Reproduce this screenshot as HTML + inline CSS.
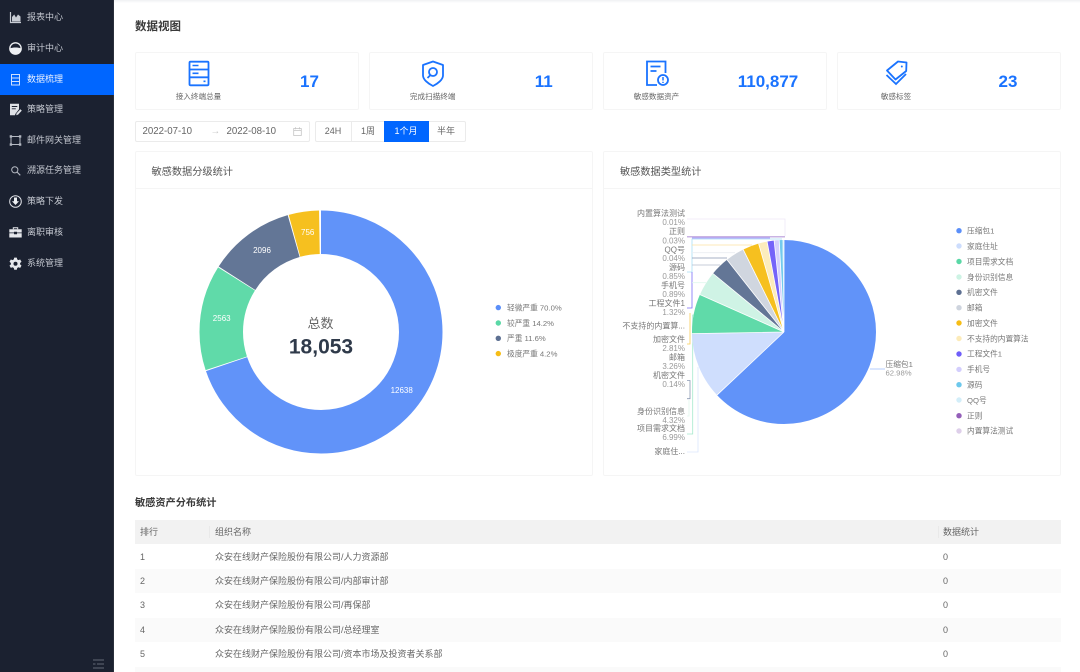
<!DOCTYPE html>
<html lang="zh-CN">
<head>
<meta charset="utf-8">
<title>数据视图</title>
<style>
html,body{margin:0;padding:0;background:#fff;width:1080px;height:672px;overflow:hidden}
body{font-family:"Liberation Sans","Noto Sans CJK SC",sans-serif;color:#666}
#root{position:relative;width:1080px;height:672px;overflow:hidden;filter:blur(.35px)}
.abs,.card,.panel,.nav,.nav a{position:absolute}
.nav{left:0;top:0;height:672px;background:#1b2130;border-right:1px solid #2a2f3b;width:113px}
.nav a{left:0;width:114px;height:31px;line-height:31px;font-size:9px;color:#c4c8d0;padding-left:27px;box-sizing:border-box;white-space:nowrap}
.nav a.on{background:#0066ff;color:#e8f0ff}
.nav svg{position:absolute;left:9px;top:9px;width:13px;height:13px}
.h1{left:135px;top:19px;font-size:11.5px;line-height:16px;font-weight:700;color:#3a3a3a}
.card{top:52px;width:224px;height:58px;border:1px solid #f5f5f5;border-radius:2px;box-sizing:border-box}
.lbl{position:absolute;top:38px;font-size:7.6px;line-height:12px;color:#666;transform:translateX(-50%);white-space:nowrap}
.val{position:absolute;top:17px;font-weight:700;font-size:17px;line-height:24px;color:#1a73ff;transform:translateX(-50%);white-space:nowrap}
.card svg{position:absolute;top:7px;width:26px;height:27px}
.picker{left:134.5px;top:120.5px;width:175px;height:21px;border:1px solid #ebebeb;border-radius:2px;box-sizing:border-box}
.picker span{position:absolute;top:0;line-height:19px;font-size:9.7px;color:#666;white-space:nowrap}
.seg{left:314.5px;top:120.5px;width:151px;height:21px;border:1px solid #ebebeb;border-radius:2px;box-sizing:border-box}
.seg span{position:absolute;top:0;height:19px;line-height:19px;font-size:9px;color:#666;text-align:center}
.seg span.on{background:#0066ff;color:#fff;box-shadow:0 0 0 1px #0066ff}
.panel{top:151px;height:324.5px;width:458px;border:1px solid #f5f5f5;border-radius:2px;box-sizing:border-box}
.panel b{position:absolute;left:16px;top:13px;font-weight:400;font-size:10.2px;line-height:16px;color:#555;white-space:nowrap}
.panel i{position:absolute;left:0;right:0;top:36px;height:1px;background:#f5f5f5}
.h2{left:135px;top:496px;font-size:10.2px;line-height:15px;font-weight:700;color:#3a3a3a}
.row{position:absolute;left:135px;width:926px;height:24.4px;font-size:9px;line-height:24.4px;color:#666}
.row span{position:absolute;top:0;white-space:nowrap}
.row.head{background:#f2f2f2}
.row.alt{background:#fafafa}
.row.head u{position:absolute;top:6px;width:1px;height:12px;background:#e9e9e9}
svg.chart{position:absolute;left:0;top:0;width:1080px;height:672px;pointer-events:none}
svg text{font-family:"Liberation Sans","Noto Sans CJK SC",sans-serif}
</style>
</head>
<body>
<div id="root">
<div class="abs" style="left:114px;top:0;width:966px;height:3px;background:linear-gradient(#f0f1f3,#fff)"></div>

<div class="nav">
  <a style="top:2px"><svg viewBox="0 0 13 13"><path d="M1.500 1v10.500H12" fill="none" stroke="#c8ccd4" stroke-width="1.200"/><path d="M3 10.500V6l2.200-2.500L7 6.500l2-3 2.500 2v5z" fill="#c8ccd4"/></svg>报表中心</a>
  <a style="top:33px"><svg viewBox="0 0 13 13"><circle cx="6.500" cy="6.500" r="5.700" fill="none" stroke="#eef0f3" stroke-width="1.300"/><path d="M.8 6.500c3.500-1.300 7.900-1.300 11.400 0a5.700 5.700 0 0 1-11.400 0z" fill="#eef0f3"/></svg>审计中心</a>
  <a class="on" style="top:64px"><svg viewBox="0 0 13 13"><path d="M2.500 1.500h8v10.500h-8zM2.500 5h8M2.500 8.500h8" fill="none" stroke="#cfe0ff" stroke-width="1"/></svg>数据梳理</a>
  <a style="top:94px"><svg viewBox="0 0 13 13"><path d="M1 .8h9v5.500L6.300 11l-.3 1.200H1z" fill="#dfe1e6"/><path d="M2.800 3.500h5.500M2.800 5.800h4" stroke="#1b2130" stroke-width=".9"/><path d="M7.200 12.300l.4-2 3.800-4 1.400 1.300-3.700 4z" fill="#dfe1e6"/></svg>策略管理</a>
  <a style="top:125px"><svg viewBox="0 0 13 13"><path d="M2 2.500h9v8H2z" fill="none" stroke="#b5b9c2" stroke-width="1"/><path d="M.7 1.200h2.400v2.400H.7zM9.900 1.200h2.400v2.400H9.900zM.7 9.400h2.400v2.400H.7zM9.900 9.400h2.400v2.400H9.900z" fill="#b5b9c2"/></svg>邮件网关管理</a>
  <a style="top:155px"><svg viewBox="0 0 13 13"><circle cx="5.800" cy="5.800" r="3.100" fill="none" stroke="#b5b9c2" stroke-width="1"/><path d="M8 8l3.300 3.300" stroke="#b5b9c2" stroke-width="1.100"/></svg>溯源任务管理</a>
  <a style="top:186px"><svg viewBox="0 0 13 13"><circle cx="6.500" cy="6.500" r="5.800" fill="none" stroke="#dfe1e6" stroke-width="1"/><path d="M5 2.500h3v3.800h2L6.500 10 3 6.300h2z" fill="#eef0f3"/></svg>策略下发</a>
  <a style="top:217px"><svg viewBox="0 0 13 13"><path d="M4.300 3.200V1.800h4.400v1.400" fill="none" stroke="#e6e8ec" stroke-width="1"/><path d="M.3 3.200h12.400v3.300H8v-.8H5v.8H.3zM.3 7.300H5v1h3v-1h4.700v4.200H.3z" fill="#e6e8ec"/></svg>离职审核</a>
  <a style="top:248px"><svg viewBox="0 0 13 13"><path d="M5.200.6h2.600l.4 1.800 1.200.7 1.800-.6 1.300 2.300-1.400 1.200v1.400l1.400 1.200-1.300 2.300-1.800-.6-1.200.7-.4 1.800H5.200l-.4-1.800-1.200-.7-1.800.6L.5 8.600l1.400-1.200V6L.5 4.800l1.300-2.300 1.800.6 1.200-.7z" fill="#e6e8ec"/><circle cx="6.500" cy="6.700" r="2" fill="#1b2130"/></svg>系统管理</a>
  <svg style="left:93px;top:659px;width:11px;height:10px" viewBox="0 0 11 10"><path d="M0 1h11M4 5h7M0 9h11M0 5h2.500" stroke="#555b68" stroke-width="1.300"/></svg>
</div>

<div class="abs h1">数据视图</div>

<div class="card" style="left:134.500px">
  <svg style="left:50px" viewBox="0 0 26 27"><rect x="3.500" y="1.700" width="19" height="23.600" rx="1" fill="none" stroke="#1a73ff" stroke-width="1.800"/><path d="M3.500 9.500h19M3.500 17.300h19" stroke="#1a73ff" stroke-width="1.800"/><path d="M6.500 5.500h6M6.500 13.300h6M17.500 21.300h2" stroke="#1a73ff" stroke-width="1.600"/></svg>
  <div class="lbl" style="left:63px">接入终端总量</div><div class="val" style="left:174px">17</div>
</div>
<div class="card" style="left:368.700px">
  <svg style="left:50px" viewBox="0 0 26 27"><path d="M13 1.500l10 3.500v10.500c0 4-5 8-10 10.500C8 23.500 3 19.500 3 15.500V5z" fill="none" stroke="#1a73ff" stroke-width="1.800" stroke-linejoin="round"/><circle cx="13" cy="12" r="4" fill="none" stroke="#1a73ff" stroke-width="1.800"/><path d="M10 15.500l-2.500 2.500" stroke="#1a73ff" stroke-width="1.800"/></svg>
  <div class="lbl" style="left:63px">完成扫描终端</div><div class="val" style="left:174px">11</div>
</div>
<div class="card" style="left:603px">
  <svg style="left:39px" viewBox="0 0 26 27"><path d="M14 25H4V1.500h18.500V13" fill="none" stroke="#1a73ff" stroke-width="1.800"/><path d="M7.500 6.500h10M7.500 11h6" stroke="#1a73ff" stroke-width="1.700"/><circle cx="20" cy="20" r="5" fill="#fff" stroke="#1a73ff" stroke-width="1.800"/><path d="M20 17v3.500M20 21.800v1.200" stroke="#1a73ff" stroke-width="1.500"/></svg>
  <div class="lbl" style="left:52.500px">敏感数据资产</div><div class="val" style="left:164px">110,877</div>
</div>
<div class="card" style="left:837px">
  <svg style="left:46px" viewBox="0 0 26 27"><path d="M3 10.500L14 1.500l8.500 1-.3 8.500L11.500 19.500z" fill="none" stroke="#1a73ff" stroke-width="1.800" stroke-linejoin="round"/><circle cx="17.800" cy="6.500" r="1" fill="#1a73ff"/><path d="M2.500 15l9.500 9 10-10" fill="none" stroke="#1a73ff" stroke-width="1.800"/></svg>
  <div class="lbl" style="left:58px">敏感标签</div><div class="val" style="left:170px">23</div>
</div>

<div class="abs picker">
  <span style="left:7px">2022-07-10</span>
  <span style="left:75px;color:#c4c4c4">→</span>
  <span style="left:91px">2022-08-10</span>
  <svg style="position:absolute;left:157px;top:5px;width:9px;height:9px" viewBox="0 0 9 9"><path d="M.7 1.500h7.600v7H.7zM.7 3.500h7.600M2.500.3v2M6.500.3v2" fill="none" stroke="#c4c4c4" stroke-width=".8"/></svg>
</div>
<div class="abs seg">
  <span style="left:0;width:35px;border-right:1px solid #ebebeb">24H</span>
  <span style="left:36px;width:33px">1周</span>
  <span class="on" style="left:69px;width:43px">1个月</span>
  <span style="left:112px;width:37px">半年</span>
</div>

<div class="panel" style="left:134.500px"><b>敏感数据分级统计</b><i></i></div>
<div class="panel" style="left:603px"><b>敏感数据类型统计</b><i></i></div>

<div class="abs h2">敏感资产分布统计</div>
<div class="row head" style="top:520px"><span style="left:5px">排行</span><u style="left:74px"></u><span style="left:80px">组织名称</span><u style="left:803px"></u><span style="left:808px">数据统计</span></div>
<div class="row" style="top:544.500px"><span style="left:5px">1</span><span style="left:80px">众安在线财产保险股份有限公司/人力资源部</span><span style="left:808px">0</span></div>
<div class="row alt" style="top:568.900px"><span style="left:5px">2</span><span style="left:80px">众安在线财产保险股份有限公司/内部审计部</span><span style="left:808px">0</span></div>
<div class="row" style="top:593.300px"><span style="left:5px">3</span><span style="left:80px">众安在线财产保险股份有限公司/再保部</span><span style="left:808px">0</span></div>
<div class="row alt" style="top:617.700px"><span style="left:5px">4</span><span style="left:80px">众安在线财产保险股份有限公司/总经理室</span><span style="left:808px">0</span></div>
<div class="row" style="top:642.100px"><span style="left:5px">5</span><span style="left:80px">众安在线财产保险股份有限公司/资本市场及投资者关系部</span><span style="left:808px">0</span></div>
<div class="row alt" style="top:666.500px;height:5.500px"></div>

<svg class="chart" viewBox="0 0 1080 672">
  <!-- donut -->
  <g fill="none" stroke-width="43.500" transform="rotate(-90 321 332)" stroke-opacity=".96">
    <circle cx="321" cy="332" r="99.750" pathLength="360" stroke="#5B8FF9" stroke-dasharray="251.500 360"/>
    <circle cx="321" cy="332" r="99.750" pathLength="360" stroke="#5AD8A6" stroke-dasharray="50.500 360" stroke-dashoffset="-252"/>
    <circle cx="321" cy="332" r="99.750" pathLength="360" stroke="#5D7092" stroke-dasharray="41.500 360" stroke-dashoffset="-303"/>
    <circle cx="321" cy="332" r="99.750" pathLength="360" stroke="#F6BD16" stroke-dasharray="14.500 360" stroke-dashoffset="-345"/>
  </g>
  <g font-size="8" fill="#fff" text-anchor="middle">
    <text x="401.700" y="393">12638</text>
    <text x="221.700" y="321">2563</text>
    <text x="262" y="253">2096</text>
    <text x="307.700" y="235">756</text>
  </g>
  <text x="320.500" y="328" font-size="13" fill="#666" text-anchor="middle">总数</text>
  <text x="321" y="353.500" font-size="21" font-weight="700" fill="#2f3a4a" text-anchor="middle">18,053</text>
  <g font-size="7.700" fill="#777">
    <circle cx="498.300" cy="307.600" r="2.700" fill="#5B8FF9"/><text x="507" y="310.500">轻微严重 70.0%</text>
    <circle cx="498.300" cy="323" r="2.700" fill="#5AD8A6"/><text x="507" y="326">较严重 14.2%</text>
    <circle cx="498.300" cy="338.300" r="2.700" fill="#5D7092"/><text x="507" y="341">严重 11.6%</text>
    <circle cx="498.300" cy="353.600" r="2.700" fill="#F6BD16"/><text x="507" y="356.500">极度严重 4.2%</text>
  </g>

  <!-- leader lines -->
  <g fill="none" stroke-width=".8">
    <path d="M687 219H785V236" stroke="#efe8f7"/>
    <path d="M687 236.700H785" stroke="#c9b3e3" stroke-width="1.500"/>
    <path d="M687 272H692V239H782" stroke="#a9def5"/>
    <path d="M687 308H692V272" stroke="#7d6ff9"/>
    <path d="M692 238H770" stroke="#8b7ffa"/>
    <path d="M687 344H690V313" stroke="#f8cd55"/>
    <path d="M692 245H752" stroke="#fce3a0"/>
    <path d="M687 380.500H690V398.700H687" stroke="#8a98b2"/>
    <path d="M692 258H727" stroke="#8a98b2"/>
    <path d="M692 265H720" stroke="#b4bdcd"/>
    <path d="M692 252.700H735" stroke="#eceef2"/>
    <path d="M692 282.700H706" stroke="#def7ed"/>
    <path d="M687 416H689V400" stroke="#e2f8ef"/>
    <path d="M687 434H692.700V315H696" stroke="#a5e9cd"/>
    <path d="M687 452H698V367" stroke="#dbe6fd"/>
    <path d="M870 369H885" stroke="#cdddfd" stroke-width="1.500"/>
  </g>

  <!-- pie -->
  <g fill="none" stroke-width="92" transform="rotate(-90 784 332)" stroke-opacity=".96">
    <circle cx="784" cy="332" r="46" pathLength="360" stroke="#5B8FF9" stroke-dasharray="226.700 360"/>
    <circle cx="784" cy="332" r="46" pathLength="360" stroke="#CDDDFD" stroke-dasharray="42.300 360" stroke-dashoffset="-226.700"/>
    <circle cx="784" cy="332" r="46" pathLength="360" stroke="#5AD8A6" stroke-dasharray="25 360" stroke-dashoffset="-269"/>
    <circle cx="784" cy="332" r="46" pathLength="360" stroke="#CDF3E4" stroke-dasharray="15.500 360" stroke-dashoffset="-294"/>
    <circle cx="784" cy="332" r="46" pathLength="360" stroke="#5D7092" stroke-dasharray="12.200 360" stroke-dashoffset="-309.500"/>
    <circle cx="784" cy="332" r="46" pathLength="360" stroke="#CED4DE" stroke-dasharray="12 360" stroke-dashoffset="-321.700"/>
    <circle cx="784" cy="332" r="46" pathLength="360" stroke="#F6BD16" stroke-dasharray="10.300 360" stroke-dashoffset="-333.700"/>
    <circle cx="784" cy="332" r="46" pathLength="360" stroke="#FCEBB9" stroke-dasharray="5.400 360" stroke-dashoffset="-344"/>
    <circle cx="784" cy="332" r="46" pathLength="360" stroke="#6F5EF9" stroke-dasharray="4.400 360" stroke-dashoffset="-349.400"/>
    <circle cx="784" cy="332" r="46" pathLength="360" stroke="#D3CEFD" stroke-dasharray="3.200 360" stroke-dashoffset="-353.800"/>
    <circle cx="784" cy="332" r="46" pathLength="360" stroke="#6DC8EC" stroke-dasharray="2 360" stroke-dashoffset="-357"/>
    <circle cx="784" cy="332" r="46" pathLength="360" stroke="#D3EEF9" stroke-dasharray="1 360" stroke-dashoffset="-359"/>
  </g>
  <path d="M784 332L717 395.100M784 332L692 333.600M784 332L700 294.600M784 332L713 273.500M784 332L727 259.800M784 332L743.200 249.500M784 332L758.600 243.600M784 332L767.100 241.600M784 332L774.100 240.500M784 332L779.200 240.100M784 332L784 240" stroke="#fff" stroke-width=".8" fill="none"/>

  <!-- pie labels -->
  <g font-size="8" fill="#777" text-anchor="end">
    <text x="685" y="216">内置算法测试</text><text x="685" y="225" fill="#999">0.01%</text>
    <text x="685" y="234">正则</text><text x="685" y="243.500" fill="#999">0.03%</text>
    <text x="685" y="252.500">QQ号</text><text x="685" y="261" fill="#999">0.04%</text>
    <text x="685" y="270">源码</text><text x="685" y="279" fill="#999">0.85%</text>
    <text x="685" y="288">手机号</text><text x="685" y="297" fill="#999">0.89%</text>
    <text x="685" y="306">工程文件1</text><text x="685" y="315" fill="#999">1.32%</text>
    <text x="685" y="328.500">不支持的内置算...</text>
    <text x="685" y="342">加密文件</text><text x="685" y="351" fill="#999">2.81%</text>
    <text x="685" y="360">邮箱</text><text x="685" y="369" fill="#999">3.26%</text>
    <text x="685" y="378">机密文件</text><text x="685" y="387" fill="#999">0.14%</text>
    <text x="685" y="414">身份识别信息</text><text x="685" y="423" fill="#999">4.32%</text>
    <text x="685" y="431">项目需求文档</text><text x="685" y="440" fill="#999">6.99%</text>
    <text x="685" y="454">家庭住...</text>
  </g>
  <text x="885.500" y="367" font-size="7.700" fill="#777">压缩包1</text>
  <text x="885.500" y="375.500" font-size="7.700" fill="#999">62.98%</text>

  <!-- pie legend -->
  <g font-size="7.700" fill="#777">
    <circle cx="959" cy="230.700" r="2.700" fill="#5B8FF9"/><text x="967" y="233.500">压缩包1</text>
    <circle cx="959" cy="246" r="2.700" fill="#CDDDFD"/><text x="967" y="249">家庭住址</text>
    <circle cx="959" cy="261.500" r="2.700" fill="#5AD8A6"/><text x="967" y="264.500">项目需求文档</text>
    <circle cx="959" cy="277" r="2.700" fill="#CDF3E4"/><text x="967" y="280">身份识别信息</text>
    <circle cx="959" cy="292.300" r="2.700" fill="#5D7092"/><text x="967" y="295">机密文件</text>
    <circle cx="959" cy="307.700" r="2.700" fill="#CED4DE"/><text x="967" y="310.500">邮箱</text>
    <circle cx="959" cy="323" r="2.700" fill="#F6BD16"/><text x="967" y="326">加密文件</text>
    <circle cx="959" cy="338.500" r="2.700" fill="#FCEBB9"/><text x="967" y="341.500">不支持的内置算法</text>
    <circle cx="959" cy="354" r="2.700" fill="#6F5EF9"/><text x="967" y="356.700">工程文件1</text>
    <circle cx="959" cy="369.400" r="2.700" fill="#D3CEFD"/><text x="967" y="372">手机号</text>
    <circle cx="959" cy="384.700" r="2.700" fill="#6DC8EC"/><text x="967" y="387.500">源码</text>
    <circle cx="959" cy="400" r="2.700" fill="#D3EEF9"/><text x="967" y="403">QQ号</text>
    <circle cx="959" cy="415.700" r="2.700" fill="#945FB9"/><text x="967" y="418.500">正则</text>
    <circle cx="959" cy="431" r="2.700" fill="#DECFEA"/><text x="967" y="433.700">内置算法测试</text>
  </g>
</svg>
</div>
</body>
</html>
